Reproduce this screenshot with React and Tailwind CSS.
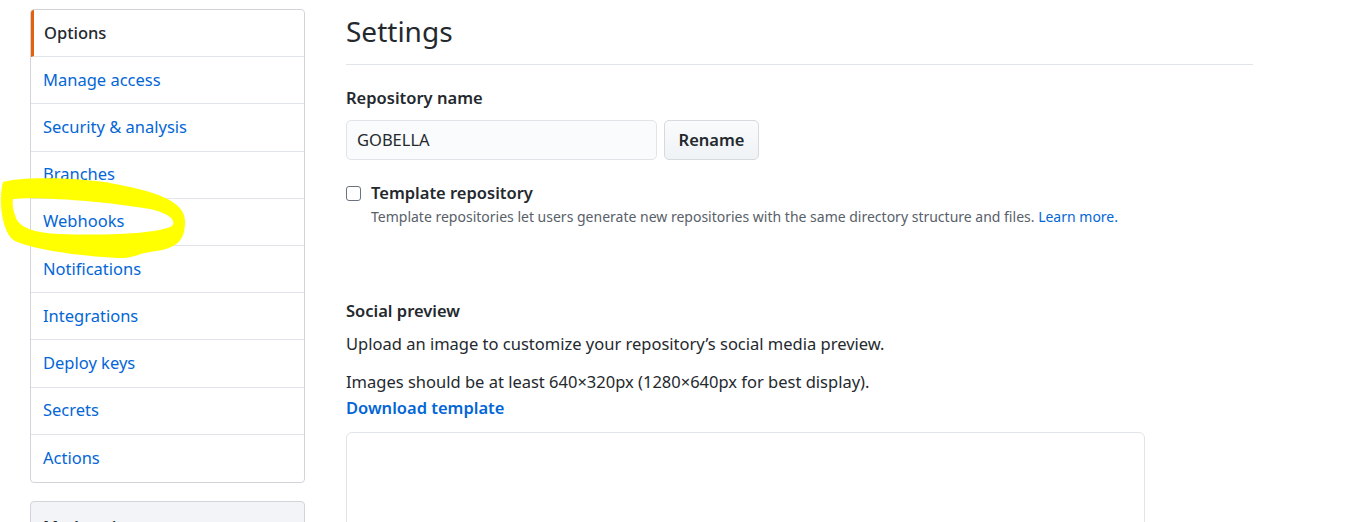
const menu = [
  'Options',
  'Manage access',
  'Security & analysis',
  'Branches',
  'Webhooks',
  'Notifications',
  'Integrations',
  'Deploy keys',
  'Secrets',
  'Actions',
]

function Highlight() {
  // freehand yellow marker loop around "Webhooks"
  return (
    <svg className="absolute left-0 top-0 pointer-events-none" width="200" height="270" viewBox="0 0 200 270">
      <path
        fillRule="evenodd"
        fill="#ffff00"
        d="M 3 182 C 20 176, 90 177, 125 186 C 160 193, 186 203, 185 222 C 185 240, 178 249, 150 252 C 140 253, 132 259, 118 258 C 80 256, 35 250, 15 241 C 2 234, -2 200, 3 182 Z
           M 13 199 C 40 196, 110 202, 150 209 C 168 213, 177 220, 172 226 C 160 233, 110 236, 60 234 C 35 233, 20 228, 16 218 C 13 210, 12 204, 13 199 Z"
      />
    </svg>
  )
}

export default function App() {
  return (
    <div className="relative h-[522px] bg-white text-[#24292e] overflow-hidden" style={{fontFamily: '"Noto Sans", "Open Sans", sans-serif'}}>
      <div className="flex gap-[41px] pl-[30px] pt-[9px]">
        {/* Sidebar */}
        <div className="w-[275px] shrink-0">
          <nav className="border border-[#d1d5da] rounded-[4px] overflow-hidden">
            {menu.map((item, i) => (
              <div
                key={item}
                className={`h-[47.2px] flex items-center px-[12px] text-[16.5px] ${i < menu.length - 1 ? 'border-b border-[#e1e4e8]' : ''} ${i === 0 ? 'border-l-[3px] border-l-[#e36209] pl-[10px] text-[#24292e] font-medium' : 'text-[#0366d6]'}`}
              >
                {item}
              </div>
            ))}
          </nav>
          <div className="mt-[18px] border border-[#d1d5da] rounded-t-[4px] bg-[#f3f4f7] h-[40px] px-[12px] pt-[13px] text-[16.5px] font-semibold">
            Moderation
          </div>
        </div>

        {/* Main */}
        <div className="w-[907px]">
          <div className="border-b border-[#e1e4e8] pb-[10px]">
            <h2 className="text-[28px] leading-[45px] font-normal">Settings</h2>
          </div>

          <div className="mt-[20px] text-[16.5px] font-semibold leading-[26px]">Repository name</div>
          <div className="mt-[9px] flex gap-[7px]">
            <div className="w-[311px] h-[40px] border border-[#e1e4e8] rounded-[5px] bg-[#fafbfc] flex items-center px-[10px] text-[16.5px]">
              GOBELLA
            </div>
            <button className="w-[95px] h-[40px] border border-[#d6d9dd] rounded-[5px] bg-gradient-to-b from-[#fafbfc] to-[#eff3f6] text-[16.5px] font-semibold">
              Rename
            </button>
          </div>

          <div className="mt-[21px] flex items-center gap-[10px]">
            <div className="w-[15px] h-[15px] border border-[#6a737d] rounded-[3px] bg-white"></div>
            <span className="text-[16.5px] font-semibold leading-[24px]">Template repository</span>
          </div>
          <p className="ml-[25px] mt-[2px] text-[14px] leading-[20px] text-[#586069]">
            Template repositories let users generate new repositories with the same directory structure and files.{' '}
            <span className="text-[#0366d6]">Learn more.</span>
          </p>

          <div className="mt-[71px] text-[16.5px] font-semibold leading-[26px]">Social preview</div>
          <p className="mt-[7px] text-[16.5px] leading-[26px]">Upload an image to customize your repository’s social media preview.</p>
          <p className="mt-[12px] text-[16.5px] leading-[26px]">Images should be at least 640×320px (1280×640px for best display).</p>
          <div className="text-[16.5px] font-semibold leading-[26px] text-[#0366d6]">Download template</div>
          <div className="mt-[11px] w-[799px] h-[120px] border border-[#e1e4e8] rounded-[6px]"></div>
        </div>
      </div>
      <Highlight />
    </div>
  )
}
